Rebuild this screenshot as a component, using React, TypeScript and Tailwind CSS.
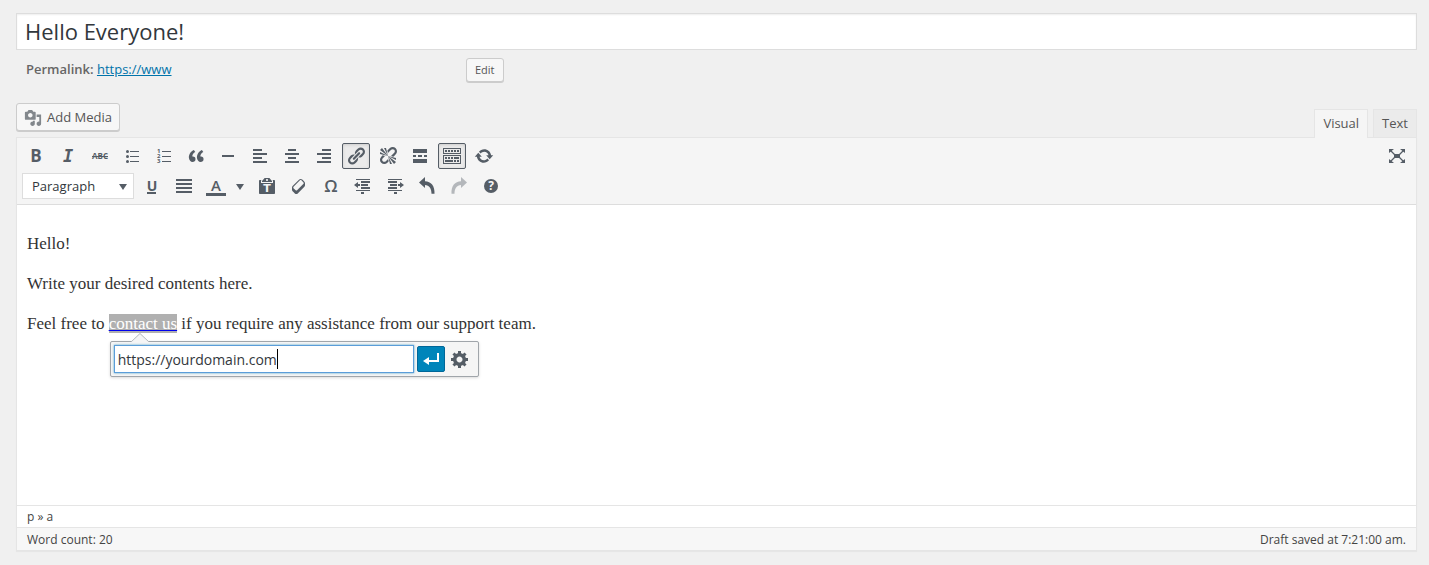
import { useState } from 'react';
import type { ReactNode } from 'react';
import clsx from 'clsx';

interface Tool {
  label: string;
  icon: ReactNode;
  disabled?: boolean;
  pressed?: boolean;
}

const glyph = 'font-["Open_Sans",sans-serif] font-bold';

const TOP_TOOLS: Tool[] = [
  { label: 'Bold', icon: <text x="10" y="16" textAnchor="middle" fontSize="17" className={glyph}>B</text> },
  {
    label: 'Italic',
    icon: (
      <text x="10" y="16" textAnchor="middle" fontSize="17" className='font-["DejaVu_Sans_Mono",monospace] font-bold italic'>
        I
      </text>
    ),
  },
  {
    label: 'Strikethrough',
    icon: (
      <>
        <text x="10" y="13" textAnchor="middle" fontSize="8" className={glyph}>ABC</text>
        <path d="M2 10h16v1H2z" />
      </>
    ),
  },
  {
    label: 'Bulleted list',
    icon: (
      <path d="M5.5 4a1.5 1.5 0 1 1 0 3 1.5 1.5 0 0 1 0-3zM8 5h9v1H8V5zM5.5 9a1.5 1.5 0 1 1 0 3 1.5 1.5 0 0 1 0-3zM8 10h9v1H8v-1zm-2.5 4a1.5 1.5 0 1 1 0 3 1.5 1.5 0 0 1 0-3zM8 15h9v1H8v-1z" />
    ),
  },
  {
    label: 'Numbered list',
    icon: (
      <>
        <path d="M8 5h9v1H8V5zm0 5h9v1H8v-1zm0 5h9v1H8v-1z" />
        <text fontSize="6" className={glyph}>
          <tspan x="3" y="7">1</tspan>
          <tspan x="3" y="12">2</tspan>
          <tspan x="3" y="17">3</tspan>
        </text>
      </>
    ),
  },
  {
    label: 'Blockquote',
    icon: (
      <path d="M9.49 13.22c0-.74-.2-1.38-.61-1.9-.62-.78-1.83-.88-2.53-.72-.29-1.65 1.11-3.75 2.92-4.65L7.88 4c-2.73 1.3-5.42 4.28-4.96 8.05C3.21 14.43 4.59 16 6.54 16c.85 0 1.56-.25 2.12-.75s.83-1.18.83-2.03zm8.05 0c0-.74-.2-1.38-.61-1.9-.63-.78-1.83-.88-2.53-.72-.29-1.65 1.11-3.75 2.92-4.65L15.93 4c-2.73 1.3-5.41 4.28-4.95 8.05.29 2.38 1.66 3.95 3.61 3.95.85 0 1.56-.25 2.12-.75s.83-1.18.83-2.03z" />
    ),
  },
  { label: 'Horizontal line', icon: <path d="M4 9h12v2H4z" /> },
  { label: 'Align left', icon: <path d="M12 5V3H3v2h9zm5 4V7H3v2h14zm-5 4v-2H3v2h9zm5 4v-2H3v2h14z" /> },
  { label: 'Align center', icon: <path d="M14 5V3H6v2h8zm3 4V7H3v2h14zm-3 4v-2H6v2h8zm3 4v-2H3v2h14z" /> },
  { label: 'Align right', icon: <path d="M17 5V3H8v2h9zm0 4V7H3v2h14zm0 4v-2H8v2h9zm0 4v-2H3v2h14z" /> },
  {
    label: 'Insert/edit link',
    pressed: true,
    icon: (
      <path d="M17.74 2.76c1.68 1.69 1.68 4.41 0 6.1l-1.53 1.52c-1.12 1.12-2.7 1.47-4.14 1.09l2.62-2.61.76-.77.76-.76c.84-.84.84-2.2 0-3.04-.84-.85-2.2-.85-3.04 0l-.77.76-3.38 3.38c-.37-1.44-.02-3.02 1.1-4.14l1.52-1.53c1.69-1.68 4.42-1.68 6.1 0zM8.59 13.43l5.34-5.34c.42-.42.42-1.1 0-1.52-.44-.43-1.13-.39-1.53 0l-5.33 5.34c-.42.42-.42 1.1 0 1.52.44.43 1.13.39 1.52 0zm-.76 2.29l4.14-4.15c.38 1.44.03 3.02-1.09 4.14l-1.52 1.53c-1.69 1.68-4.41 1.68-6.1 0-1.68-1.68-1.68-4.42 0-6.1l1.53-1.52c1.12-1.12 2.7-1.47 4.14-1.1l-4.14 4.15c-.85.84-.85 2.2 0 3.05.84.84 2.2.84 3.04 0z" />
    ),
  },
  {
    label: 'Remove link',
    icon: (
      <path d="M17.74 2.26c1.68 1.69 1.68 4.41 0 6.1l-1.53 1.52c-.32.33-.69.58-1.08.77L13 10l1.69-1.64.76-.77.76-.76c.84-.84.84-2.2 0-3.04-.84-.85-2.2-.85-3.04 0l-.77.76-.76.76L10 7l-.65-2.14c.19-.38.44-.75.77-1.07l1.52-1.53c1.69-1.68 4.42-1.68 6.1 0zM2 4l8 6-6-8zm4-2l4 8-2-8H6zM2 6l8 4-8-2V6zm7.36 7.69L10 13l.74 2.35-1.38 1.39c-1.69 1.68-4.41 1.68-6.1 0-1.68-1.68-1.68-4.42 0-6.1l1.39-1.38L7 10l-.69.64-1.52 1.53c-.85.84-.85 2.2 0 3.04.84.85 2.2.85 3.04 0zM18 16l-8-6 6 8zm-4 2l-4-8 2 8h2zm4-4l-8-4 8 2v2z" />
    ),
  },
  { label: 'Insert Read More tag', icon: <path d="M17 7V3H3v4h14zM6 11V9H3v2h3zm6 0V9H8v2h4zm5 0V9h-3v2h3zm0 6v-4H3v4h14z" /> },
  {
    label: 'Toolbar Toggle',
    pressed: true,
    icon: (
      <path d="M19 2v6H1V2h18zm-1 5V3H2v4h16zM5 4v2H3V4h2zm3 0v2H6V4h2zm3 0v2H9V4h2zm3 0v2h-2V4h2zm3 0v2h-2V4h2zm2 5v9H1V9h18zm-1 8v-7H2v7h16zM5 11v2H3v-2h2zm3 0v2H6v-2h2zm3 0v2H9v-2h2zm6 0v2h-5v-2h5zm-6 3v2H3v-2h8zm3 0v2h-2v-2h2zm3 0v2h-2v-2h2z" />
    ),
  },
  {
    label: 'Refresh',
    icon: (
      <path d="M10.2 3.28c3.53 0 6.43 2.61 6.92 6h2.08l-3.5 4-3.5-4h2.32c-.45-1.97-2.21-3.45-4.32-3.45-1.45 0-2.73.71-3.54 1.78L4.95 5.66C6.23 4.2 8.11 3.28 10.2 3.28zm-.4 13.44c-3.52 0-6.43-2.61-6.92-6H.8l3.5-4c1.17 1.33 2.33 2.67 3.5 4H5.48c.45 1.97 2.21 3.45 4.32 3.45 1.45 0 2.73-.71 3.54-1.78l1.71 1.95c-1.28 1.46-3.15 2.38-5.25 2.38z" />
    ),
  },
];

const FORMAT_TOOLS: Tool[] = [
  {
    label: 'Underline',
    icon: (
      <>
        <text x="10" y="15" textAnchor="middle" fontSize="14" className={glyph}>U</text>
        <path d="M5 16h9v2H5z" />
      </>
    ),
  },
  { label: 'Justify', icon: <path d="M2 3h16v2H2V3zm0 4h16v2H2V7zm0 4h16v2H2v-2zm0 4h16v2H2v-2z" /> },
];

const EDIT_TOOLS: Tool[] = [
  {
    label: 'Paste as text',
    icon: (
      <>
        <path d="M12.38 2L15 5v1H5V5l2.64-3h4.74zM10 5c.55 0 1-.44 1-1 0-.55-.45-1-1-1s-1 .45-1 1c0 .56.45 1 1 1zm5.45-1H17c.55 0 1 .45 1 1v12c0 .56-.45 1-1 1H3c-.55 0-1-.44-1-1V5c0-.55.45-1 1-1h1.55L4 4.63V7h12V4.63z" />
        <text x="10" y="16" textAnchor="middle" fontSize="11" fill="#f5f5f5" className='font-["DejaVu_Sans",sans-serif] font-bold'>T</text>
      </>
    ),
  },
  {
    label: 'Clear formatting',
    icon: (
      <path d="M14.29 4.59l1.1 1.11c.41.4.61.94.61 1.47v2.12c0 .53-.2 1.07-.61 1.47l-6.63 6.63c-.4.41-.94.61-1.47.61s-1.07-.2-1.47-.61l-1.11-1.1-1.1-1.11c-.41-.4-.61-.94-.61-1.47v-2.12c0-.54.2-1.07.61-1.48l6.63-6.62c.4-.41.94-.61 1.47-.61s1.06.2 1.47.61zm-6.21 9.7l6.42-6.42c.39-.39.39-1.03 0-1.43L12.36 4.3c-.19-.19-.45-.29-.72-.29s-.52.1-.71.29l-6.42 6.42c-.39.4-.39 1.04 0 1.43l2.14 2.14c.38.38 1.04.38 1.43 0z" />
    ),
  },
  {
    label: 'Special character',
    icon: <text x="10" y="16" textAnchor="middle" fontSize="17" className='font-["Open_Sans",sans-serif] font-semibold'>Ω</text>,
  },
  { label: 'Decrease indent', icon: <path d="M3 3h14v1H3zM8 5h9v2H8zM8 8h7v2H8zM8 11h9v2H8zM3 14h14v1H3zM8 16h3v2H8zM7 8v2H5v2L1 9l4-3v2z" /> },
  { label: 'Increase indent', icon: <path d="M3 3h14v1H3zM3 5h9v2H3zM5 8h7v2H5zM3 11h9v2H3zM3 14h14v1H3zM9 16h3v2H9zM13 8v2h2v2l4-3-4-3v2z" /> },
  { label: 'Undo', icon: <path d="M8 5.2c6 .2 9.9 4.500 9.500 12.500h-3c0-5-2.300-8.500-6.500-8.700V12L2 6.500 8 1z" /> },
  { label: 'Redo', disabled: true, icon: <path d="M12 5.2c-6 .2-9.900 4.500-9.500 12.500h3c0-5 2.300-8.500 6.500-8.700V12l6-5.500L12 1z" /> },
  {
    label: 'Keyboard Shortcuts',
    icon: (
      <>
        <circle cx="10" cy="10" r="7" />
        <text x="10" y="14" textAnchor="middle" fontSize="12" fill="#f5f5f5" className={glyph}>?</text>
      </>
    ),
  },
];

function Icon({ children }: { children: ReactNode }) {
  return (
    <svg viewBox="0 0 20 20" className="size-5 shrink-0 overflow-visible fill-current" aria-hidden="true">
      {children}
    </svg>
  );
}

function ToolButton({ label, icon, disabled, pressed }: Tool) {
  return (
    <button
      type="button"
      aria-label={label}
      aria-pressed={pressed}
      disabled={disabled}
      className={clsx(
        'flex h-[26px] w-7 items-center justify-center rounded-xs border text-[#555d66] disabled:opacity-40',
        pressed ? 'border-[#555d66] bg-[#ebebeb] shadow-[inset_0_1px_3px_#cccccc]' : 'border-transparent'
      )}
    >
      <Icon>{icon}</Icon>
    </button>
  );
}

function LinkPopup() {
  const [url, setUrl] = useState('https://yourdomain.com');

  return (
    <div className="absolute top-[29px] left-px flex h-9 w-[369px] items-center rounded-xs border border-[#a0a5aa] bg-[#f5f5f5] px-[3px] font-['Open_Sans',sans-serif] shadow-[0_1px_3px_#00000026]">
      <svg viewBox="0 0 18 9" className="absolute -top-[9px] left-5 h-[9px] w-[18px]" aria-hidden="true">
        <path d="M0 9L9 0l9 9z" fill="#f5f5f5" />
        <path d="M0 9L9 .5 18 9" fill="none" stroke="#b4b9be" />
      </svg>
      <div className="relative">
        <input
          type="text"
          aria-label="Link URL"
          value={url}
          onChange={(e) => setUrl(e.target.value)}
          className="block h-7 w-[300px] border border-[#5b9dd9] bg-white px-[3px] text-sm text-[#32373c] shadow-[0_0_2px_#1e8cbecc] outline-none"
        />
        <span className="absolute top-1 left-[163px] h-5 w-px bg-black" />
      </div>
      <button type="button" aria-label="Apply" className="ml-[3px] flex h-[26px] w-7 items-center justify-center rounded-xs border border-[#006799] bg-[#0085ba] text-white">
        <Icon>
          <path d="M16 4h2v9H8v3l-6-4 6-4v3h8z" />
        </Icon>
      </button>
      <button type="button" aria-label="Link options" className="ml-px flex h-[26px] w-7 items-center justify-center text-[#555d66]">
        <Icon>
          <path d="M18 12h-2.18c-.17.7-.44 1.35-.81 1.93l1.54 1.54-2.1 2.1-1.54-1.54c-.58.36-1.23.63-1.91.79V19H8v-2.18c-.68-.16-1.33-.43-1.91-.79l-1.54 1.54-2.12-2.12 1.54-1.54c-.36-.58-.63-1.23-.79-1.91H1V9.03h2.17c.16-.7.44-1.35.8-1.94L2.43 5.55l2.1-2.1 1.54 1.54c.58-.37 1.24-.64 1.93-.81V2h3v2.18c.68.16 1.33.43 1.91.79l1.54-1.54 2.12 2.12-1.54 1.54c.36.59.64 1.24.8 1.94H18V12zm-8.5 1.5c1.66 0 3-1.34 3-3s-1.34-3-3-3-3 1.34-3 3 1.34 3 3 3z" />
        </Icon>
      </button>
    </div>
  );
}

export default function App() {
  const [title, setTitle] = useState('Hello Everyone!');

  return (
    <main className="min-h-screen bg-[#f0f0f0] pt-[13px] pr-3 pb-3.5 pl-4 font-['Open_Sans',sans-serif] text-[13px] text-[#444444]">
      <input
        type="text"
        aria-label="Post title"
        value={title}
        onChange={(e) => setTitle(e.target.value)}
        className="block h-[37px] w-full border border-[#dddddd] bg-white px-2 pb-0.5 text-[22px] text-[#32373c] shadow-[inset_0_1px_2px_#00000012] outline-none"
      />

      <div className="mt-2 flex h-6 items-center px-2.5">
        <div className="w-[440px] text-[#666666]">
          <strong className="font-semibold">Permalink:</strong>{' '}
          <a href="#permalink" className="text-[#0073aa] underline">https://www</a>
        </div>
        <button type="button" className="h-6 rounded-[3px] border border-[#cccccc] bg-[#f7f7f7] px-2 text-[11px] text-[#555555] shadow-[0_1px_0_#cccccc]">
          Edit
        </button>
      </div>

      <div className="mt-[21px] flex items-start justify-between">
        <button type="button" className="flex h-7 items-center gap-[5px] rounded-[3px] border border-[#cccccc] bg-[#f7f7f7] px-[7px] pt-0.5 text-[#555555] shadow-[0_1px_0_#cccccc]">
          <svg viewBox="0 0 20 20" className="size-[18px] fill-[#82878c]" aria-hidden="true">
            <path d="M13 11V4c0-.55-.45-1-1-1h-1.67L9 1H5L3.67 3H2c-.55 0-1 .45-1 1v7c0 .55.45 1 1 1h10c.55 0 1-.45 1-1zM7 4.5c1.38 0 2.5 1.12 2.5 2.5S8.38 9.5 7 9.5 4.5 8.38 4.5 7 5.62 4.5 7 4.5zM14 6h5v10.5c0 1.38-1.12 2.5-2.5 2.5S14 17.88 14 16.5s1.12-2.5 2.5-2.5c.17 0 .34.02.5.05V9h-3V6zm-4 8.05V13h2v3.5c0 1.38-1.12 2.5-2.5 2.5S7 17.88 7 16.5 8.12 14 9.5 14c.17 0 .34.02.5.05z" />
          </svg>
          Add Media
        </button>
        <div className="flex gap-[5px] pt-1.5 text-[#555555]">
          <button type="button" className="relative z-10 -mb-px h-[29px] border border-b-0 border-[#e5e5e5] bg-[#f5f5f5] px-2">Visual</button>
          <button type="button" className="h-7 border border-b-0 border-[#e5e5e5] bg-[#ebebeb] px-2">Text</button>
        </div>
      </div>

      <section className="border border-[#e5e5e5] bg-white shadow-[0_1px_1px_#0000000a]">
        <div className="flex flex-col gap-1 border-b border-[#dddddd] bg-[#f5f5f5] p-[5px]">
          <div className="flex gap-1">
            {TOP_TOOLS.map((tool) => (
              <ToolButton key={tool.label} {...tool} />
            ))}
            <div className="ml-auto">
              <ToolButton
                label="Distraction-free writing"
                icon={
                  <>
                    <path d="M7 8h6v4H7zM2 3h5L2 7zM18 3h-5l5 4zM2 17h5l-5-4zM18 17h-5l5-4z" />
                    <path d="M3 4l5 5M17 4l-5 5M3 16l5-5M17 16l-5-5" stroke="currentColor" strokeWidth="1.3" />
                  </>
                }
              />
            </div>
          </div>
          <div className="flex gap-1">
            <div className="relative flex">
              <select aria-label="Block format" className="h-[26px] w-28 appearance-none border border-[#dddddd] bg-white pt-0.5 pl-[9px] text-[13px] text-[#32373c]">
                <option>Paragraph</option>
                <option>Heading 1</option>
                <option>Heading 2</option>
              </select>
              <svg viewBox="0 0 8 6" className="pointer-events-none absolute top-[11px] right-[7px] h-1.5 w-2 fill-[#555d66]" aria-hidden="true">
                <path d="M0 0h8L4 6z" />
              </svg>
            </div>
            {FORMAT_TOOLS.map((tool) => (
              <ToolButton key={tool.label} {...tool} />
            ))}
            <div className="flex w-[47px] text-[#555d66]">
              <button type="button" aria-label="Text color" className="flex h-[26px] w-7 items-center justify-center">
                <Icon>
                  <text x="10" y="15" textAnchor="middle" fontSize="15" className='font-["Open_Sans",sans-serif] font-semibold'>A</text>
                  <path d="M0 17h20v3H0z" />
                </Icon>
              </button>
              <button type="button" aria-label="Choose text color" className="flex grow items-center justify-center pt-0.5">
                <svg viewBox="0 0 8 6" className="h-1.5 w-2 fill-current" aria-hidden="true">
                  <path d="M0 0h8L4 6z" />
                </svg>
              </button>
            </div>
            {EDIT_TOOLS.map((tool) => (
              <ToolButton key={tool.label} {...tool} />
            ))}
          </div>
        </div>

        <article className="flex min-h-[300px] flex-col gap-4 px-2.5 pt-[27px] font-['Liberation_Serif',serif] text-[17px] leading-6 text-[#333333]">
          <p>Hello!</p>
          <p>Write your desired contents here.</p>
          <p>
            Feel free to{' '}
            <span className="relative inline-block">
              <a href="#contact" className="bg-[#b0b0b0] text-white underline decoration-[#0000ee]">contact us</a>
              <LinkPopup />
            </span>{' '}
            if you require any assistance from our support team.
          </p>
        </article>

        <div className="border-t border-[#e5e5e5] px-2.5 text-xs leading-[21px]">p » a</div>
        <footer className="flex justify-between border-t border-[#e5e5e5] bg-[#f7f7f7] px-2.5 pt-px text-xs leading-[21px]">
          <span>Word count: 20</span>
          <span>Draft saved at 7:21:00 am.</span>
        </footer>
      </section>
    </main>
  );
}
